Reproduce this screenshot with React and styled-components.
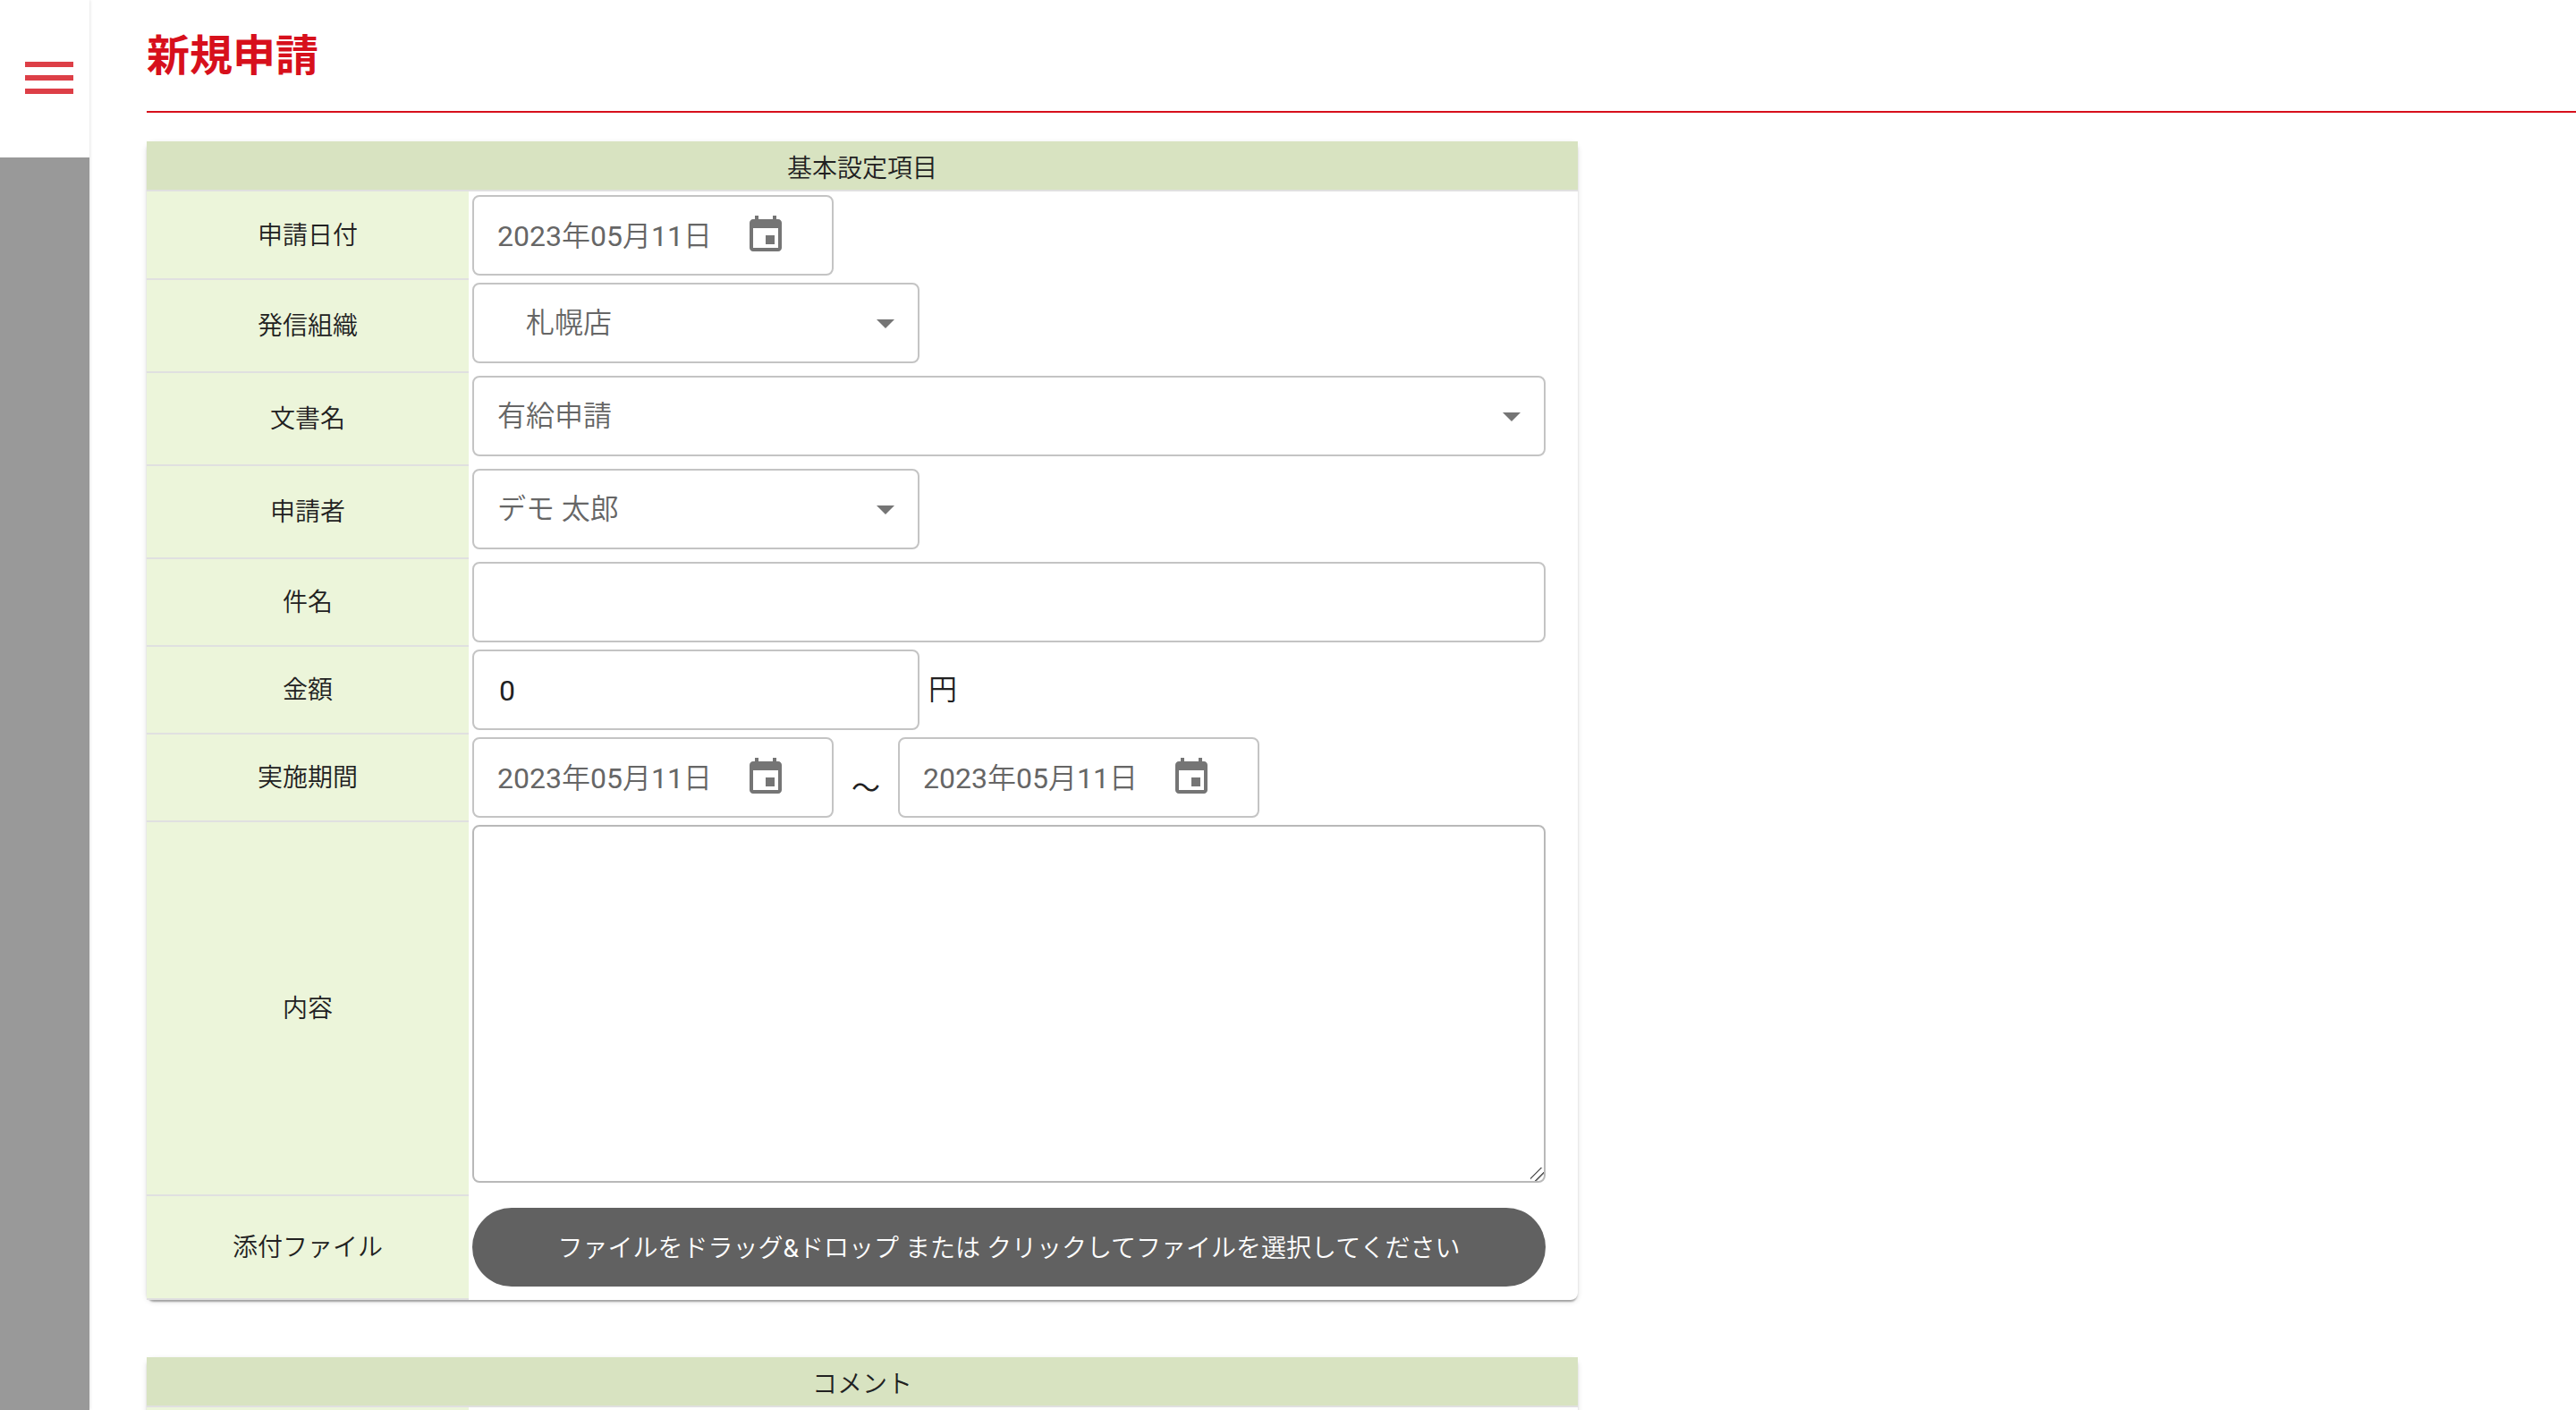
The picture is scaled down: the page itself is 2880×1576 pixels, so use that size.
import React, { useState } from "react";
import styled, { createGlobalStyle } from "styled-components";

const organizations = ["札幌店", "函館店", "旭川店"];
const documents = ["有給申請", "経費申請", "出張申請"];
const applicants = ["デモ 太郎", "デモ 花子"];

function DateField({ id, label, value, onChange }) {
  return (
    <DateBox>
      <input
        id={id}
        type="text"
        aria-label={label}
        value={value}
        onChange={(e) => onChange(e.target.value)}
      />
      <button type="button" aria-label="日付を選択">
        <svg viewBox="0 0 24 24">
          <path d="M17 12h-5v5h5v-5zM16 1v2H8V1H6v2H5c-1.11 0-1.99.9-1.99 2L3 19c0 1.1.89 2 2 2h14c1.1 0 2-.9 2-2V5c0-1.1-.9-2-2-2h-1V1h-2zm3 18H5V8h14v11z" />
        </svg>
      </button>
    </DateBox>
  );
}

function SelectField({ id, options, wide, indent }) {
  const [value, setValue] = useState(options[0]);

  return (
    <SelectBox $wide={wide} $indent={indent}>
      <select id={id} value={value} onChange={(e) => setValue(e.target.value)}>
        {options.map((option) => (
          <option key={option} value={option}>
            {option}
          </option>
        ))}
      </select>
      <svg viewBox="0 0 24 24">
        <path d="M7 10l5 5 5-5z" />
      </svg>
    </SelectBox>
  );
}

function App() {
  const [date, setDate] = useState("2023年05月11日");
  const [from, setFrom] = useState("2023年05月11日");
  const [to, setTo] = useState("2023年05月11日");
  const [amount, setAmount] = useState("0");

  return (
    <>
      <GlobalStyle />
      <Layout>
        <Sidebar>
          <div className="top">
            <button type="button" aria-label="メニュー">
              <svg viewBox="0 0 24 24">
                <path d="M3 18h18v-2H3v2zm0-5h18v-2H3v2zm0-7v2h18V6H3z" />
              </svg>
            </button>
          </div>
        </Sidebar>

        <Main>
          <Title>新規申請</Title>

          <FormTable>
            <thead>
              <tr>
                <Heading colSpan={2}>基本設定項目</Heading>
              </tr>
            </thead>
            <tbody>
              <tr>
                <LabelCell>
                  <label htmlFor="date">申請日付</label>
                </LabelCell>
                <FieldCell>
                  <DateField id="date" value={date} onChange={setDate} />
                </FieldCell>
              </tr>
              <tr>
                <LabelCell>
                  <label htmlFor="organization">発信組織</label>
                </LabelCell>
                <FieldCell $bottom={10}>
                  <SelectField
                    id="organization"
                    options={organizations}
                    indent
                  />
                </FieldCell>
              </tr>
              <tr>
                <LabelCell>
                  <label htmlFor="document">文書名</label>
                </LabelCell>
                <FieldCell $bottom={10}>
                  <SelectField id="document" options={documents} wide />
                </FieldCell>
              </tr>
              <tr>
                <LabelCell>
                  <label htmlFor="applicant">申請者</label>
                </LabelCell>
                <FieldCell $bottom={10}>
                  <SelectField id="applicant" options={applicants} />
                </FieldCell>
              </tr>
              <tr>
                <LabelCell>
                  <label htmlFor="subject">件名</label>
                </LabelCell>
                <FieldCell>
                  <TextInput id="subject" type="text" $wide />
                </FieldCell>
              </tr>
              <tr>
                <LabelCell>
                  <label htmlFor="amount">金額</label>
                </LabelCell>
                <FieldCell>
                  <Inline>
                    <TextInput
                      id="amount"
                      type="text"
                      inputMode="numeric"
                      value={amount}
                      onChange={(e) => setAmount(e.target.value)}
                    />
                    <Unit>円</Unit>
                  </Inline>
                </FieldCell>
              </tr>
              <tr>
                <LabelCell>
                  <label htmlFor="from">実施期間</label>
                </LabelCell>
                <FieldCell>
                  <Inline>
                    <DateField id="from" value={from} onChange={setFrom} />
                    <Wave>～</Wave>
                    <DateField
                      id="to"
                      label="実施期間 終了日"
                      value={to}
                      onChange={setTo}
                    />
                  </Inline>
                </FieldCell>
              </tr>
              <tr>
                <LabelCell>
                  <label htmlFor="content">内容</label>
                </LabelCell>
                <FieldCell $bottom={14}>
                  <TextArea id="content" />
                </FieldCell>
              </tr>
              <tr>
                <LabelCell>
                  <label htmlFor="file">添付ファイル</label>
                </LabelCell>
                <FieldCell $top={14} $bottom={14}>
                  <DropButton id="file" type="button">
                    ファイルをドラッグ&amp;ドロップ または
                    クリックしてファイルを選択してください
                  </DropButton>
                </FieldCell>
              </tr>
            </tbody>
          </FormTable>

          <FormTable>
            <thead>
              <tr>
                <Heading colSpan={2}>コメント</Heading>
              </tr>
            </thead>
            <tbody>
              <tr>
                <LabelCell />
                <FieldCell $bottom={14}>
                  <TextArea aria-label="コメント" />
                </FieldCell>
              </tr>
            </tbody>
          </FormTable>
        </Main>
      </Layout>
    </>
  );
}

export default App;

const GlobalStyle = createGlobalStyle`
  * {
    box-sizing: border-box;
  }

  body {
    margin: 0;
    background: #fff;
    color: #212121;
    font-family: Roboto, "Noto Sans CJK JP", sans-serif;
  }

  input,
  select,
  textarea,
  button {
    margin: 0;
    font-family: inherit;
  }
`;

const Layout = styled.div`
  display: flex;
  height: 100vh;
`;

const Sidebar = styled.nav`
  flex: none;
  width: 100px;
  background: #999;
  box-shadow: 0 0 4px rgba(0, 0, 0, 0.16);

  .top {
    display: flex;
    justify-content: center;
    align-items: center;
    height: 176px;
    padding: 0 0 2px 10px;
    background: #fff;
  }

  button {
    padding: 0;
    border: none;
    background: none;
    cursor: pointer;
  }

  svg {
    display: block;
    width: 72px;
    height: 72px;
    fill: #dd3f47;
  }
`;

const Main = styled.main`
  flex: 1;
  min-width: 0;
  padding-left: 64px;
  overflow-y: auto;
  scrollbar-width: none;
`;

const Title = styled.h1`
  margin: 0 0 32px;
  padding: 27px 0 25px;
  border-bottom: 2px solid #d7101c;
  color: #d7101c;
  font-size: 48px;
  font-weight: 700;
  line-height: 72px;
`;

const FormTable = styled.table`
  width: 100%;
  max-width: 1600px;
  margin-bottom: 64px;
  border-collapse: collapse;
  border-radius: 8px;
  font-size: 28px;
  line-height: 40px;
  box-shadow: 0 4px 2px -2px rgba(0, 0, 0, 0.2), 0 2px 2px rgba(0, 0, 0, 0.14),
    0 2px 6px rgba(0, 0, 0, 0.12);
`;

const Heading = styled.th`
  padding: 11px 8px 3px;
  border-bottom: 2px solid #e0e0e0;
  background: #d8e3c1;
  font-weight: 350;
`;

const LabelCell = styled.th`
  width: 360px;
  padding: 6px 4px 4px;
  border-bottom: 2px solid #e0e0e0;
  background: #ecf5da;
  font-weight: 350;
`;

const FieldCell = styled.td`
  padding: ${(p) => p.$top || 4}px 36px ${(p) => p.$bottom || 4}px 4px;
`;

const Inline = styled.div`
  display: flex;
  align-items: center;
`;

const DateBox = styled.div`
  display: flex;
  align-items: center;
  width: 404px;
  height: 90px;
  padding: 0 26px;
  border: 2px solid #c4c4c4;
  border-radius: 8px;

  input {
    flex: 1;
    min-width: 0;
    margin-right: 16px;
    padding: 0 0 4px;
    border: none;
    outline: none;
    background: none;
    color: #666;
    font-family: Roboto, "Noto Sans CJK JP DemiLight", "Noto Sans CJK JP",
      sans-serif;
    font-size: 32px;
  }

  button {
    padding: 0 24px;
    border: none;
    background: none;
    cursor: pointer;
  }

  svg {
    display: block;
    width: 48px;
    height: 48px;
    fill: #757575;
  }
`;

const SelectBox = styled.div`
  position: relative;
  width: ${(p) => (p.$wide ? "100%" : "500px")};

  select {
    display: block;
    width: 100%;
    height: 90px;
    padding: 0 64px 0 ${(p) => (p.$indent ? "58px" : "26px")};
    appearance: none;
    border: 2px solid #c4c4c4;
    border-radius: 8px;
    background: none;
    color: #666;
    font-size: 32px;
    font-weight: 350;
  }

  svg {
    position: absolute;
    top: 21px;
    right: 14px;
    width: 48px;
    height: 48px;
    fill: #757575;
    pointer-events: none;
  }
`;

const TextInput = styled.input`
  display: block;
  width: ${(p) => (p.$wide ? "100%" : "500px")};
  height: 90px;
  padding: 2px 28px 0;
  border: 2px solid #c4c4c4;
  border-radius: 8px;
  color: #212121;
  font-size: 32px;
`;

const Unit = styled.span`
  margin-left: 10px;
  font-size: 32px;
  font-weight: 350;
`;

const Wave = styled.span`
  padding: 24px 20px 0;
  font-size: 32px;
`;

const TextArea = styled.textarea`
  display: block;
  width: 100%;
  height: 400px;
  padding: 28px;
  border: 2px solid #b9b9b9;
  border-radius: 8px;
  font-size: 32px;
  resize: vertical;

  &::-webkit-resizer {
    background: linear-gradient(
      135deg,
      transparent 8px,
      #616161 8px,
      #616161 9px,
      transparent 10px,
      transparent 14px,
      #616161 14px,
      #616161 15px,
      transparent 16px
    );
  }
`;

const DropButton = styled.button`
  display: block;
  width: 100%;
  height: 88px;
  padding: 0 0 2px;
  border: none;
  border-radius: 44px;
  background: #616161;
  color: #fff;
  font-family: Roboto, "Noto Sans CJK JP DemiLight", "Noto Sans CJK JP",
    sans-serif;
  font-size: 28px;
  cursor: pointer;
`;
